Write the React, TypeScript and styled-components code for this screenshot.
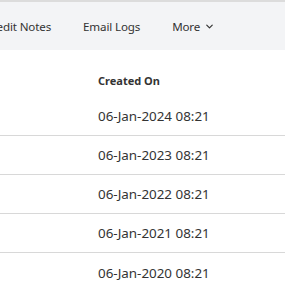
import React from "react";
import styled, { createGlobalStyle } from "styled-components";
import { ChevronDown } from "lucide-react";

const GlobalStyle = createGlobalStyle`
  html, body {
    margin: 0;
    padding: 0;
    background: #ffffff;
    font-family: "Noto Sans", "Open Sans", sans-serif;
    color: #333333;
  }
`;

const Page = styled.div`
  width: 285px;
  height: 285px;
  overflow: hidden;
  background: #ffffff;
`;

const TabBar = styled.div`
  height: 48px;
  border-top: 2px solid #dcdcdc;
  background: #f3f4f6;
  overflow: hidden;
  display: flex;
  align-items: center;
`;

const TabTrack = styled.div<{ $scroll: number }>`
  display: flex;
  align-items: center;
  gap: 32px;
  margin-left: ${({ $scroll }) => -$scroll}px;
  white-space: nowrap;
`;

const Tab = styled.div`
  display: flex;
  align-items: center;
  gap: 4px;
  font-size: 11.6px;
  letter-spacing: -0.15px;
  color: #333333;
`;

const Table = styled.div`
  display: flex;
  flex-direction: column;
`;

const HeadRow = styled.div`
  display: grid;
  grid-template-columns: 98px 1fr;
  align-items: end;
  height: 47px;
  box-sizing: border-box;
  padding-bottom: 9px;
`;

const Row = styled.div`
  display: grid;
  grid-template-columns: 98px 1fr;
  align-items: center;
  height: 39px;
  box-sizing: border-box;
  border-bottom: 1px solid #d8d8d8;
  &:last-child {
    border-bottom: none;
  }
`;

const HeadCell = styled.div`
  font-size: 11px;
  font-weight: 700;
  color: #333333;
`;

const Cell = styled.div`
  font-size: 13.4px;
  color: #333333;
`;

const tabs = ["Credit Notes", "Email Logs"];
const dates = [
  "06-Jan-2024 08:21",
  "06-Jan-2023 08:21",
  "06-Jan-2022 08:21",
  "06-Jan-2021 08:21",
  "06-Jan-2020 08:21",
];

export default function App() {
  return (
    <Page>
      <GlobalStyle />
      <TabBar>
        <TabTrack $scroll={15}>
          {tabs.map((t) => (
            <Tab key={t}>{t}</Tab>
          ))}
          <Tab>
            More
            <ChevronDown size={11} strokeWidth={2.6} />
          </Tab>
        </TabTrack>
      </TabBar>
      <Table>
        <HeadRow>
          <div />
          <HeadCell>Created On</HeadCell>
        </HeadRow>
        {dates.map((d) => (
          <Row key={d}>
            <div />
            <Cell>{d}</Cell>
          </Row>
        ))}
      </Table>
    </Page>
  );
}
